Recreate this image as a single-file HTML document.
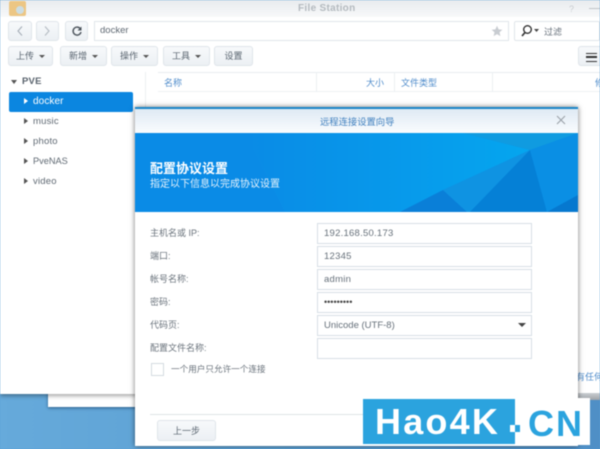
<!DOCTYPE html>
<html><head><meta charset="utf-8">
<style>
html,body{margin:0;padding:0}
body{width:600px;height:449px;overflow:hidden;position:relative;background:#5a9fd4;font-family:"Liberation Sans","Noto Sans CJK SC",sans-serif;color:#55606b;font-size:9px}
#root{position:absolute;left:0;top:0;width:600px;height:449px;overflow:hidden;filter:blur(.4px)}
.a{position:absolute;white-space:nowrap}
.btn{position:absolute;box-sizing:border-box;border:1px solid #dfe5ea;border-radius:3px;background:linear-gradient(#f7f9fb,#ecf0f4);text-align:center;color:#5a6570;font-size:9px;line-height:18px;height:20px}
.inp{position:absolute;left:317px;width:215px;height:21px;box-sizing:border-box;border:1px solid #d8dfe6;background:#fff;font-size:9.5px;line-height:19px;padding-left:6px;color:#66707a;letter-spacing:.25px}
.lb{position:absolute;left:150px;font-size:9px;color:#6a737c;white-space:nowrap}
.tr{position:absolute;left:24px;width:0;height:0;border-left:4px solid #555;border-top:3px solid transparent;border-bottom:3px solid transparent}
.nm{position:absolute;left:33px;font-size:9.5px;color:#5f6973;letter-spacing:.2px}
.th{position:absolute;top:76px;color:#4f8ccb;font-size:9px}
.car{display:inline-block;width:0;height:0;border-top:3px solid #555;border-left:3px solid transparent;border-right:3px solid transparent;vertical-align:middle;margin-left:5px}
</style></head><body><div id="root">
<div class="a" style="left:0;top:394px;width:600px;height:55px;background:linear-gradient(90deg,#66aadb,#5b9fd2 50%,#4f8fc6)"></div>
<div class="a" style="left:48px;top:380px;width:100px;height:27px;background:#fff;box-shadow:0 1px 3px rgba(0,40,80,.6)"></div>
<div class="a" style="left:0;top:0;width:600px;height:394px;background:#fff;box-shadow:0 2px 4px rgba(0,0,0,.35)"></div>
<div class="a" style="left:578px;top:393px;width:22px;height:7px;background:linear-gradient(#c9cdd1,#9ea3a8)"></div>
<div class="a" style="left:0;top:0;width:600px;height:17px;background:linear-gradient(#e8ebee,#f8f9fa)"></div>
<div class="a" style="left:9px;top:1px;width:17px;height:15px;background:#ecc684;border-radius:2px"></div>
<div class="a" style="left:16px;top:6px;width:8px;height:8px;background:#cddde2;border-radius:50%"></div>
<div class="a" style="left:298px;top:3px;font-size:10px;font-weight:bold;color:#b4babf;letter-spacing:.3px">File Station</div>
<div class="a" style="left:569px;top:4px;font-size:9px;color:#c8ccd0">?</div>
<div class="a" style="left:589px;top:8px;width:11px;height:1px;background:#c0c4c8"></div>

<div class="btn" style="left:8px;top:21px;width:24px"></div>
<svg class="a" style="left:15px;top:25px" width="10" height="12"><path d="M7 1.5 3 6l4 4.5" fill="none" stroke="#a5aeb7" stroke-width="1.1"/></svg>
<div class="btn" style="left:36px;top:21px;width:23px"></div>
<svg class="a" style="left:42px;top:25px" width="10" height="12"><path d="M3 1.5 7 6l-4 4.5" fill="none" stroke="#b4bbc2" stroke-width="1.1"/></svg>
<div class="btn" style="left:65px;top:21px;width:23px"></div>
<svg class="a" style="left:71px;top:25px" width="12" height="12"><path d="M9.5 4A4 4 0 1 0 10 7" fill="none" stroke="#4c545c" stroke-width="1.4"/><path d="M10.5 1.5v4h-4z" fill="#4c545c"/></svg>
<div class="a" style="left:94px;top:21px;width:415px;height:20px;box-sizing:border-box;border:1px solid #e1e6ea;background:#fff;font-size:9.5px;line-height:18px;padding-left:5px;color:#5f6973">docker</div>
<svg class="a" style="left:491px;top:25px" width="12" height="12"><path d="M6 .8 7.6 4.4l3.8.4-2.9 2.5.9 3.8L6 9.1l-3.4 2 .9-3.8L.6 4.8l3.8-.4z" fill="#c8ccd1"/></svg>
<div class="a" style="left:514px;top:21px;width:86px;height:20px;box-sizing:border-box;border:1px solid #e1e6ea;border-radius:2px;background:#fff"></div>
<svg class="a" style="left:520px;top:24px" width="20" height="14"><circle cx="7.5" cy="5.5" r="3.8" fill="none" stroke="#333" stroke-width="1.4"/><path d="M5 8.5 2 12" stroke="#333" stroke-width="1.7"/><path d="M14 5h5l-2.5 3z" fill="#444"/></svg>
<div class="a" style="left:544px;top:25px;font-size:9px;color:#68727c">过滤</div>

<div class="btn" style="left:8px;top:46px;width:45px">上传<i class="car"></i></div>
<div class="btn" style="left:60px;top:46px;width:47px">新增<i class="car"></i></div>
<div class="btn" style="left:111px;top:46px;width:47px">操作<i class="car"></i></div>
<div class="btn" style="left:163px;top:46px;width:47px">工具<i class="car"></i></div>
<div class="btn" style="left:214px;top:46px;width:39px">设置</div>
<div class="btn" style="left:578px;top:46px;width:30px"></div>
<div class="a" style="left:586px;top:53px;width:11px;height:7px;border-top:1.5px solid #333;border-bottom:1.5px solid #333"></div>
<div class="a" style="left:586px;top:56px;width:11px;height:1.5px;background:#333"></div>

<div class="a" style="left:145px;top:72px;width:1px;height:322px;background:#eceff2"></div>
<div class="a" style="left:158px;top:72px;width:442px;height:1px;background:#e8ecef"></div>
<div class="a" style="left:158px;top:91px;width:442px;height:1px;background:#eef1f3"></div>
<div class="a" style="left:316px;top:72px;width:1px;height:20px;background:#eceff2"></div>
<div class="a" style="left:394px;top:72px;width:1px;height:20px;background:#eceff2"></div>
<div class="a" style="left:492px;top:72px;width:1px;height:20px;background:#eceff2"></div>
<div class="th" style="left:164px">名称</div>
<div class="th" style="left:366px">大小</div>
<div class="th" style="left:401px">文件类型</div>
<div class="th" style="left:595px">修</div>

<div class="a" style="left:11px;top:80px;width:0;height:0;border-top:4px solid #555;border-left:3px solid transparent;border-right:3px solid transparent"></div>
<div class="a" style="left:22px;top:76px;font-size:9.5px;font-weight:bold;color:#59636d;letter-spacing:.2px">PVE</div>
<div class="a" style="left:9px;top:92px;width:124px;height:20px;background:#0b86e0;border-radius:2px"></div>
<div class="tr" style="top:98px;border-left-color:#fff"></div>
<div class="nm" style="top:96px;color:#fff;font-size:10px;letter-spacing:.1px">docker</div>
<div class="tr" style="top:118px"></div><div class="nm" style="top:116px">music</div>
<div class="tr" style="top:138px"></div><div class="nm" style="top:136px">photo</div>
<div class="tr" style="top:158px"></div><div class="nm" style="top:156px;letter-spacing:0;font-size:9.2px">PveNAS</div>
<div class="tr" style="top:178px"></div><div class="nm" style="top:176px">video</div>

<div class="a" style="left:576px;top:370px;font-size:9px;color:#4f8ccb;background:#fff;width:24px;overflow:hidden">有任何</div>

<!-- dialog -->
<div class="a" style="left:135px;top:107px;width:443px;height:339px;background:#fff;box-shadow:0 0 5px rgba(0,0,0,.55)"></div>
<div class="a" style="left:135px;top:107px;width:443px;height:2px;background:#1a86c8"></div>
<div class="a" style="left:135px;top:109px;width:443px;height:24px;background:linear-gradient(#dfeaf4,#fafcfe)"></div>
<div class="a" style="left:320px;top:114px;font-size:9.3px;color:#3f7fbe">远程连接设置向导</div>
<svg class="a" style="left:555px;top:114px" width="12" height="12"><path d="M2 2l8 8M10 2l-8 8" stroke="#9aa1a8" stroke-width="1.1"/></svg>
<svg class="a" style="left:135px;top:133px" width="443" height="79">
<defs><linearGradient id="g" x1="0" x2="1" y1="0" y2="0"><stop offset="0" stop-color="#0a8be6"/><stop offset="1" stop-color="#05a6ef"/></linearGradient></defs>
<rect width="443" height="79" fill="#0a8be6"/>
<polygon points="110,0 328,0 395,17 308,57 265,79 150,79" fill="url(#g)"/>
<polygon points="328,0 443,0 395,17" fill="#109be0"/>
<polygon points="308,57 332,79 265,79" fill="#0a7fd8"/>
<polygon points="395,17 308,57 332,79 335,79" fill="#0f93e2"/>
<polygon points="395,17 335,79 412,79" fill="#0580d6"/>
<polygon points="395,17 443,0 443,62 412,79" fill="#0a8fe4"/>
<polygon points="443,62 412,79 443,79" fill="#0678cf"/>
</svg>
<div class="a" style="left:150px;top:158px;font-size:13px;font-weight:bold;color:#fff">配置协议设置</div>
<div class="a" style="left:150px;top:175px;font-size:10px;color:#e4f2fc">指定以下信息以完成协议设置</div>

<div class="lb" style="top:226px">主机名或 IP:</div>
<div class="lb" style="top:249px">端口:</div>
<div class="lb" style="top:272px">帐号名称:</div>
<div class="lb" style="top:295px">密码:</div>
<div class="lb" style="top:318px">代码页:</div>
<div class="lb" style="top:341px">配置文件名称:</div>

<div class="inp" style="top:223px">192.168.50.173</div>
<div class="inp" style="top:246px">12345</div>
<div class="inp" style="top:269px">admin</div>
<div class="inp" style="top:292px;font-size:9px;letter-spacing:0;color:#444">•••••••••</div>
<div class="inp" style="top:315px;letter-spacing:0">Unicode (UTF-8)</div>
<div class="a" style="left:518px;top:323px;width:0;height:0;border-top:4px solid #444;border-left:4px solid transparent;border-right:4px solid transparent"></div>
<div class="inp" style="top:338px"></div>

<div class="a" style="left:151px;top:363px;width:13px;height:13px;box-sizing:border-box;border:1px solid #d5dbe1;background:#fff"></div>
<div class="lb" style="left:171px;top:363px;font-size:8.6px">一个用户只允许一个连接</div>

<div class="a" style="left:150px;top:414px;width:428px;height:1px;background:#dfe3e6"></div>
<div class="btn" style="left:157px;top:420px;width:59px;height:21px;line-height:20px">上一步</div>

<!-- watermark -->
<div class="a" style="left:515px;top:398px;width:75px;height:47px;background:#fff"></div>
<div class="a" style="left:363px;top:399px;width:152px;height:45px;background:#2ba3de"></div>
<div class="a" style="left:375px;top:399px;font-size:36px;line-height:46px;font-weight:bold;color:#fff;letter-spacing:2.2px;font-family:'Liberation Sans',sans-serif">Hao4K</div>
<div class="a" style="left:510px;top:425px;width:5px;height:7px;background:#fff"></div>
<div class="a" style="left:515px;top:425px;width:5px;height:7px;background:#2ba3de"></div>
<div class="a" style="left:528px;top:401px;font-size:36px;line-height:46px;font-weight:bold;color:#2ba3de;letter-spacing:2px;font-family:'Liberation Sans',sans-serif">CN</div>
</div></body></html>
